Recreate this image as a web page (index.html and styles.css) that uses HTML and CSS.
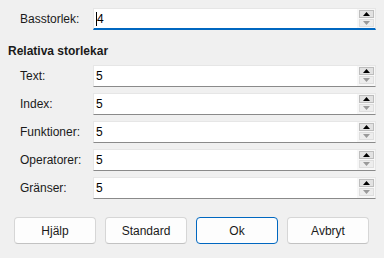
FILE: index.html
```html
<!DOCTYPE html>
<html lang="sv">
<head>
<meta charset="utf-8">
<title>Teckenstorlek</title>
<link rel="stylesheet" href="styles.css">
</head>
<body>
<div class="dialog">
  <div class="row base">
    <label class="label">Basstorlek:</label>
    <div class="spin focused">
      <div class="value"><span class="caret"></span>4</div>
      <div class="arrows">
        <span class="btn up"><svg width="7" height="4" viewBox="0 0 7 4"><path d="M0 4 L3.5 0 L7 4 Z"/></svg></span>
        <span class="btn down"><svg width="7" height="4" viewBox="0 0 7 4"><path d="M0 0 L3.5 4 L7 0 Z"/></svg></span>
      </div>
    </div>
  </div>

  <div class="heading">Relativa storlekar</div>

  <div class="group">
    <div class="row">
      <label class="label">Text:</label>
      <div class="spin">
        <div class="value">5</div>
        <div class="arrows">
          <span class="btn up"><svg width="7" height="4" viewBox="0 0 7 4"><path d="M0 4 L3.5 0 L7 4 Z"/></svg></span>
          <span class="btn down"><svg width="7" height="4" viewBox="0 0 7 4"><path d="M0 0 L3.5 4 L7 0 Z"/></svg></span>
        </div>
      </div>
    </div>
    <div class="row">
      <label class="label">Index:</label>
      <div class="spin">
        <div class="value">5</div>
        <div class="arrows">
          <span class="btn up"><svg width="7" height="4" viewBox="0 0 7 4"><path d="M0 4 L3.5 0 L7 4 Z"/></svg></span>
          <span class="btn down"><svg width="7" height="4" viewBox="0 0 7 4"><path d="M0 0 L3.5 4 L7 0 Z"/></svg></span>
        </div>
      </div>
    </div>
    <div class="row">
      <label class="label">Funktioner:</label>
      <div class="spin">
        <div class="value">5</div>
        <div class="arrows">
          <span class="btn up"><svg width="7" height="4" viewBox="0 0 7 4"><path d="M0 4 L3.5 0 L7 4 Z"/></svg></span>
          <span class="btn down"><svg width="7" height="4" viewBox="0 0 7 4"><path d="M0 0 L3.5 4 L7 0 Z"/></svg></span>
        </div>
      </div>
    </div>
    <div class="row">
      <label class="label">Operatorer:</label>
      <div class="spin">
        <div class="value">5</div>
        <div class="arrows">
          <span class="btn up"><svg width="7" height="4" viewBox="0 0 7 4"><path d="M0 4 L3.5 0 L7 4 Z"/></svg></span>
          <span class="btn down"><svg width="7" height="4" viewBox="0 0 7 4"><path d="M0 0 L3.5 4 L7 0 Z"/></svg></span>
        </div>
      </div>
    </div>
    <div class="row">
      <label class="label">Gränser:</label>
      <div class="spin">
        <div class="value">5</div>
        <div class="arrows">
          <span class="btn up"><svg width="7" height="4" viewBox="0 0 7 4"><path d="M0 4 L3.5 0 L7 4 Z"/></svg></span>
          <span class="btn down"><svg width="7" height="4" viewBox="0 0 7 4"><path d="M0 0 L3.5 4 L7 0 Z"/></svg></span>
        </div>
      </div>
    </div>
  </div>

  <div class="buttons">
    <button class="pb">Hjälp</button>
    <button class="pb">Standard</button>
    <button class="pb default">Ok</button>
    <button class="pb">Avbryt</button>
  </div>
</div>
</body>
</html>
```

FILE: styles.css
```css
html, body {
  margin: 0;
  padding: 0;
  background: #f0f0f0;
}
body {
  font-family: "Liberation Sans", Arial, sans-serif;
  font-size: 12px;
  color: #1a1a1a;
}
.dialog {
  width: 384px;
  height: 258px;
  box-sizing: border-box;
  padding: 8px 8px 0 8px;
  display: flex;
  flex-direction: column;
}
.row {
  display: flex;
  align-items: center;
  height: 22px;
  padding-left: 12px;
}
.label {
  width: 73px;
  flex: none;
}
.spin {
  flex: 1;
  height: 22px;
  box-sizing: border-box;
  display: flex;
  background: #f7f7f7;
  border: 1px solid #e6e6e6;
  border-bottom: 1px solid #8a8a8a;
}
.spin.focused {
  border-bottom: 2px solid #0067c0;
}
.value {
  flex: 1;
  background: #ffffff;
  padding-left: 2px;
  display: flex;
  align-items: center;
  color: #000;
}
.caret {
  display: inline-block;
  width: 1px;
  height: 14px;
  background: #000;
  margin-right: 0;
  position: relative;
  left: 0;
}
.focused .value {
  padding-left: 2px;
}
.arrows {
  width: 18px;
  flex: none;
  display: flex;
  flex-direction: column;
  align-items: center;
  padding-top: 1px;
  gap: 1px;
}
.btn {
  width: 15px;
  height: 8px;
  box-sizing: border-box;
  display: flex;
  align-items: center;
  justify-content: center;
}
.btn.up {
  background: #e2e2e2;
  border: 1px solid #bdbdbd;
}
.btn.up svg {
  fill: #000;
}
.btn.down {
  background: #ededed;
  border: 1px solid #dedede;
}
.btn.down svg {
  fill: #9a9a9a;
}
.heading {
  font-weight: bold;
  height: 16px;
  line-height: 16px;
  margin-top: 13px;
  margin-bottom: 6px;
}
.group {
  display: flex;
  flex-direction: column;
  gap: 6px;
}
.buttons {
  display: flex;
  gap: 9px;
  margin-top: 18px;
  padding-left: 6px;
}
.pb {
  width: 82px;
  height: 27px;
  box-sizing: border-box;
  font-family: inherit;
  font-size: 12px;
  color: #1a1a1a;
  background: #fdfdfd;
  border: 1px solid #d6d6d6;
  border-bottom-color: #c2c2c2;
  border-radius: 4px;
  padding: 0;
}
.pb.default {
  border: 1px solid #0067c0;
}
```
